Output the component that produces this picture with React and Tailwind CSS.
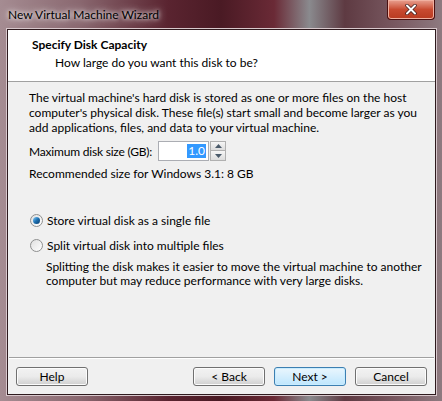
import { useState } from "react";

const font = { fontFamily: 'Lato, "Liberation Sans", sans-serif' };

const WinButton = ({ label, primary }) => (
  <button
    className={`w-[72px] h-[19px] rounded-[3px] border text-[12px] leading-none text-black flex items-center justify-center ${
      primary
        ? "border-[#3c7fb1] bg-gradient-to-b from-[#eaf6fd] to-[#bee6fd] shadow-[inset_0_0_0_1px_#c8ecff]"
        : "border-[#707070] bg-gradient-to-b from-[#f2f2f2] via-[#ebebeb] to-[#cfcfcf] shadow-[inset_0_0_0_1px_#fcfcfc]"
    }`}
  >
    {label}
  </button>
);

const Radio = ({ checked, label, onClick }) => (
  <div className="flex items-center gap-[4px] cursor-default" onClick={onClick}>
    <span className="w-[13px] h-[13px] rounded-full border border-[#8e8f8f] bg-gradient-to-br from-[#e0e0e0] to-[#ffffff] flex items-center justify-center">
      {checked && (
        <span className="w-[7px] h-[7px] rounded-full bg-gradient-to-br from-[#7fd0ff] via-[#1c6fb0] to-[#0a3d6e]" />
      )}
    </span>
    <span>{label}</span>
  </div>
);

export default function App() {
  const [single, setSingle] = useState(true);

  return (
    <div
      className="w-[442px] h-[401px] relative overflow-hidden bg-[linear-gradient(90deg,#a58c92_0%,#8a6870_18%,#5a2430_38%,#4a1a24_50%,#6a2a36_62%,#8a8a8e_70%,#5e3a42_78%,#7a5a62_90%,#8e7a80_100%)]"
      style={font}
    >
      {/* TITLE BAR */}
      <div className="h-[29px] flex items-start">
        <span className="ml-[8px] mt-[7px] text-[12px] leading-[15px] text-black [text-shadow:0_0_8px_#ffffff,0_0_4px_#ffffff]">
          New Virtual Machine Wizard
        </span>
      </div>

      {/* CLOSE */}
      <div className="absolute top-0 left-[387px] w-[48px] h-[20px] rounded-b-[4px] border border-[#4a1010] border-t-0 bg-gradient-to-b from-[#e8a090] via-[#c84a30] to-[#b83a20] flex items-center justify-center shadow-[inset_0_0_0_1px_#f0b0a0]">
        <svg width="12" height="11" viewBox="0 0 12 11">
          <path d="M2 1.5 L10 9.5 M10 1.5 L2 9.5" stroke="#3a1a1a" strokeWidth="3.4" strokeLinecap="round" />
          <path d="M2 1.5 L10 9.5 M10 1.5 L2 9.5" stroke="#ffffff" strokeWidth="2" strokeLinecap="round" />
        </svg>
      </div>

      {/* CLIENT */}
      <div className="ml-[7px] w-[429px] h-[366px] border border-[#2e1a1e] bg-[#f0f0f0] flex flex-col text-[12px] leading-[15px] text-black whitespace-nowrap shadow-[0_0_0_1px_#d8c8cc]">
        {/* HEADER */}
        <div className="h-[52px] bg-white border-b border-[#a0a0a0] shrink-0">
          <div className="ml-[24px] mt-[7px] font-bold">Specify Disk Capacity</div>
          <div className="ml-[47px] mt-[3px]">How large do you want this disk to be?</div>
        </div>

        {/* BODY */}
        <div className="px-[21px] pt-[8px] flex-1">
          <p>
            The virtual machine's hard disk is stored as one or more files on the host
            <br />
            computer's physical disk. These file(s) start small and become larger as you
            <br />
            add applications, files, and data to your virtual machine.
          </p>

          <div className="flex items-center mt-[6px]">
            <span className="w-[129px] tracking-[-0.2px]">Maximum disk size (GB):</span>
            <div className="w-[51px] h-[20px] border border-[#abadb3] bg-white flex items-center justify-end pr-[2px]">
              <span className="bg-[#3399ff] text-white px-[1px] leading-[14px]">1.0</span>
            </div>
            <div className="flex flex-col ml-[1px]">
              <span className="w-[16px] h-[10px] border border-[#b0b0b0] bg-gradient-to-b from-[#f6f6f6] to-[#dcdcdc] flex items-center justify-center">
                <svg width="7" height="4" viewBox="0 0 7 4"><path d="M0 4 L3.5 0 L7 4Z" fill="#4a5a6a" /></svg>
              </span>
              <span className="w-[16px] h-[10px] border border-t-0 border-[#b0b0b0] bg-gradient-to-b from-[#f6f6f6] to-[#dcdcdc] flex items-center justify-center">
                <svg width="7" height="4" viewBox="0 0 7 4"><path d="M0 0 L7 0 L3.5 4Z" fill="#4a5a6a" /></svg>
              </span>
            </div>
          </div>

          <p className="mt-[5px]">Recommended size for Windows 3.1: 8 GB</p>

          <div className="mt-[32px] flex flex-col gap-[10px] pl-[1px]">
            <Radio checked={single} label="Store virtual disk as a single file" onClick={() => setSingle(true)} />
            <Radio checked={!single} label="Split virtual disk into multiple files" onClick={() => setSingle(false)} />
          </div>

          <p className="ml-[17px] mt-[7px] leading-[14px]">
            Splitting the disk makes it easier to move the virtual machine to another
            <br />
            computer but may reduce performance with very large disks.
          </p>
        </div>

        {/* FOOTER */}
        <div className="shrink-0 mx-[1px] border-t border-[#a0a0a0] shadow-[inset_0_1px_0_#ffffff] h-[37px] flex items-start pt-[9px] px-[7px]">
          <WinButton label="Help" />
          <div className="flex-1" />
          <div className="flex gap-[9px]">
            <WinButton label="< Back" />
            <WinButton label="Next >" primary />
            <WinButton label="Cancel" />
          </div>
        </div>
      </div>
    </div>
  );
}
